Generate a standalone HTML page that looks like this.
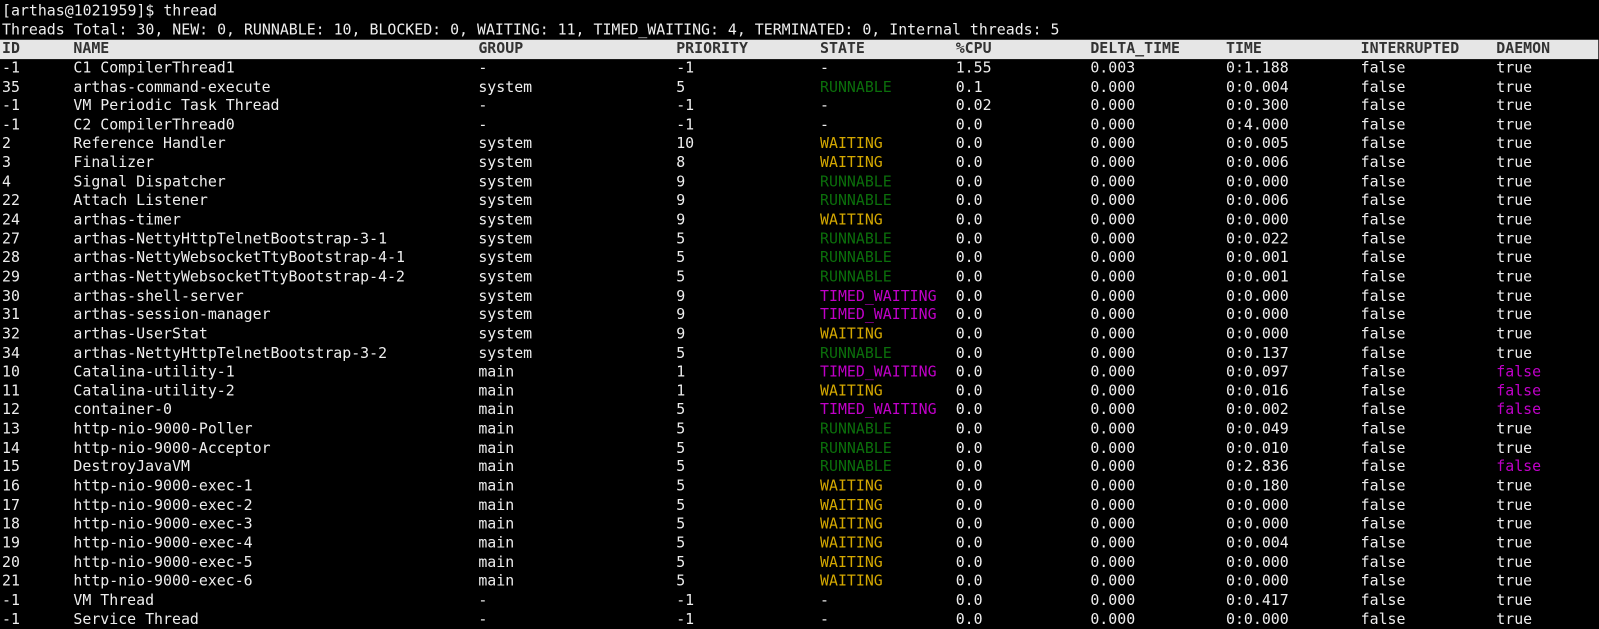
<!DOCTYPE html>
<html><head><meta charset="utf-8"><style>
body{margin:0;background:#000;width:1599px;height:627px;overflow:hidden;font-family:"DejaVu Sans Mono","Liberation Mono",monospace;font-size:14.6px;color:#eeeeee}
.w{position:absolute;left:2px;top:2px;width:1565px;transform:scale(1.02);transform-origin:0 0}
.l{height:18.65px;line-height:18.65px;white-space:pre;display:flex}
.h{background:#e6e6e6;color:#333;font-weight:bold;margin-left:-2px;padding-left:2px}
.l span{display:inline-block;flex:none}
.l span:nth-child(1){width:70px}.l span:nth-child(2){width:397px}.l span:nth-child(3){width:194px}.l span:nth-child(4){width:141px}.l span:nth-child(5){width:133px}.l span:nth-child(6){width:132px}.l span:nth-child(7){width:133px}.l span:nth-child(8){width:132px}.l span:nth-child(9){width:133px}
.r{color:#0b6e0b}.t{color:#c000c8}.wt{color:#d4a800}.f{color:#c000c8}
</style></head><body><div class="w">
<div class="l">[arthas@1021959]$ thread</div>
<div class="l">Threads Total: 30, NEW: 0, RUNNABLE: 10, BLOCKED: 0, WAITING: 11, TIMED_WAITING: 4, TERMINATED: 0, Internal threads: 5</div>
<div class="l h"><span>ID</span><span>NAME</span><span>GROUP</span><span>PRIORITY</span><span>STATE</span><span>%CPU</span><span>DELTA_TIME</span><span>TIME</span><span>INTERRUPTED</span><span>DAEMON</span></div>
<div class="l"><span>-1</span><span>C1 CompilerThread1</span><span>-</span><span>-1</span><span>-</span><span>1.55</span><span>0.003</span><span>0:1.188</span><span>false</span><span>true</span></div>
<div class="l"><span>35</span><span>arthas-command-execute</span><span>system</span><span>5</span><span class="r">RUNNABLE</span><span>0.1</span><span>0.000</span><span>0:0.004</span><span>false</span><span>true</span></div>
<div class="l"><span>-1</span><span>VM Periodic Task Thread</span><span>-</span><span>-1</span><span>-</span><span>0.02</span><span>0.000</span><span>0:0.300</span><span>false</span><span>true</span></div>
<div class="l"><span>-1</span><span>C2 CompilerThread0</span><span>-</span><span>-1</span><span>-</span><span>0.0</span><span>0.000</span><span>0:4.000</span><span>false</span><span>true</span></div>
<div class="l"><span>2</span><span>Reference Handler</span><span>system</span><span>10</span><span class="wt">WAITING</span><span>0.0</span><span>0.000</span><span>0:0.005</span><span>false</span><span>true</span></div>
<div class="l"><span>3</span><span>Finalizer</span><span>system</span><span>8</span><span class="wt">WAITING</span><span>0.0</span><span>0.000</span><span>0:0.006</span><span>false</span><span>true</span></div>
<div class="l"><span>4</span><span>Signal Dispatcher</span><span>system</span><span>9</span><span class="r">RUNNABLE</span><span>0.0</span><span>0.000</span><span>0:0.000</span><span>false</span><span>true</span></div>
<div class="l"><span>22</span><span>Attach Listener</span><span>system</span><span>9</span><span class="r">RUNNABLE</span><span>0.0</span><span>0.000</span><span>0:0.006</span><span>false</span><span>true</span></div>
<div class="l"><span>24</span><span>arthas-timer</span><span>system</span><span>9</span><span class="wt">WAITING</span><span>0.0</span><span>0.000</span><span>0:0.000</span><span>false</span><span>true</span></div>
<div class="l"><span>27</span><span>arthas-NettyHttpTelnetBootstrap-3-1</span><span>system</span><span>5</span><span class="r">RUNNABLE</span><span>0.0</span><span>0.000</span><span>0:0.022</span><span>false</span><span>true</span></div>
<div class="l"><span>28</span><span>arthas-NettyWebsocketTtyBootstrap-4-1</span><span>system</span><span>5</span><span class="r">RUNNABLE</span><span>0.0</span><span>0.000</span><span>0:0.001</span><span>false</span><span>true</span></div>
<div class="l"><span>29</span><span>arthas-NettyWebsocketTtyBootstrap-4-2</span><span>system</span><span>5</span><span class="r">RUNNABLE</span><span>0.0</span><span>0.000</span><span>0:0.001</span><span>false</span><span>true</span></div>
<div class="l"><span>30</span><span>arthas-shell-server</span><span>system</span><span>9</span><span class="t">TIMED_WAITING</span><span>0.0</span><span>0.000</span><span>0:0.000</span><span>false</span><span>true</span></div>
<div class="l"><span>31</span><span>arthas-session-manager</span><span>system</span><span>9</span><span class="t">TIMED_WAITING</span><span>0.0</span><span>0.000</span><span>0:0.000</span><span>false</span><span>true</span></div>
<div class="l"><span>32</span><span>arthas-UserStat</span><span>system</span><span>9</span><span class="wt">WAITING</span><span>0.0</span><span>0.000</span><span>0:0.000</span><span>false</span><span>true</span></div>
<div class="l"><span>34</span><span>arthas-NettyHttpTelnetBootstrap-3-2</span><span>system</span><span>5</span><span class="r">RUNNABLE</span><span>0.0</span><span>0.000</span><span>0:0.137</span><span>false</span><span>true</span></div>
<div class="l"><span>10</span><span>Catalina-utility-1</span><span>main</span><span>1</span><span class="t">TIMED_WAITING</span><span>0.0</span><span>0.000</span><span>0:0.097</span><span>false</span><span class="f">false</span></div>
<div class="l"><span>11</span><span>Catalina-utility-2</span><span>main</span><span>1</span><span class="wt">WAITING</span><span>0.0</span><span>0.000</span><span>0:0.016</span><span>false</span><span class="f">false</span></div>
<div class="l"><span>12</span><span>container-0</span><span>main</span><span>5</span><span class="t">TIMED_WAITING</span><span>0.0</span><span>0.000</span><span>0:0.002</span><span>false</span><span class="f">false</span></div>
<div class="l"><span>13</span><span>http-nio-9000-Poller</span><span>main</span><span>5</span><span class="r">RUNNABLE</span><span>0.0</span><span>0.000</span><span>0:0.049</span><span>false</span><span>true</span></div>
<div class="l"><span>14</span><span>http-nio-9000-Acceptor</span><span>main</span><span>5</span><span class="r">RUNNABLE</span><span>0.0</span><span>0.000</span><span>0:0.010</span><span>false</span><span>true</span></div>
<div class="l"><span>15</span><span>DestroyJavaVM</span><span>main</span><span>5</span><span class="r">RUNNABLE</span><span>0.0</span><span>0.000</span><span>0:2.836</span><span>false</span><span class="f">false</span></div>
<div class="l"><span>16</span><span>http-nio-9000-exec-1</span><span>main</span><span>5</span><span class="wt">WAITING</span><span>0.0</span><span>0.000</span><span>0:0.180</span><span>false</span><span>true</span></div>
<div class="l"><span>17</span><span>http-nio-9000-exec-2</span><span>main</span><span>5</span><span class="wt">WAITING</span><span>0.0</span><span>0.000</span><span>0:0.000</span><span>false</span><span>true</span></div>
<div class="l"><span>18</span><span>http-nio-9000-exec-3</span><span>main</span><span>5</span><span class="wt">WAITING</span><span>0.0</span><span>0.000</span><span>0:0.000</span><span>false</span><span>true</span></div>
<div class="l"><span>19</span><span>http-nio-9000-exec-4</span><span>main</span><span>5</span><span class="wt">WAITING</span><span>0.0</span><span>0.000</span><span>0:0.004</span><span>false</span><span>true</span></div>
<div class="l"><span>20</span><span>http-nio-9000-exec-5</span><span>main</span><span>5</span><span class="wt">WAITING</span><span>0.0</span><span>0.000</span><span>0:0.000</span><span>false</span><span>true</span></div>
<div class="l"><span>21</span><span>http-nio-9000-exec-6</span><span>main</span><span>5</span><span class="wt">WAITING</span><span>0.0</span><span>0.000</span><span>0:0.000</span><span>false</span><span>true</span></div>
<div class="l"><span>-1</span><span>VM Thread</span><span>-</span><span>-1</span><span>-</span><span>0.0</span><span>0.000</span><span>0:0.417</span><span>false</span><span>true</span></div>
<div class="l"><span>-1</span><span>Service Thread</span><span>-</span><span>-1</span><span>-</span><span>0.0</span><span>0.000</span><span>0:0.000</span><span>false</span><span>true</span></div>
</div></body></html>
